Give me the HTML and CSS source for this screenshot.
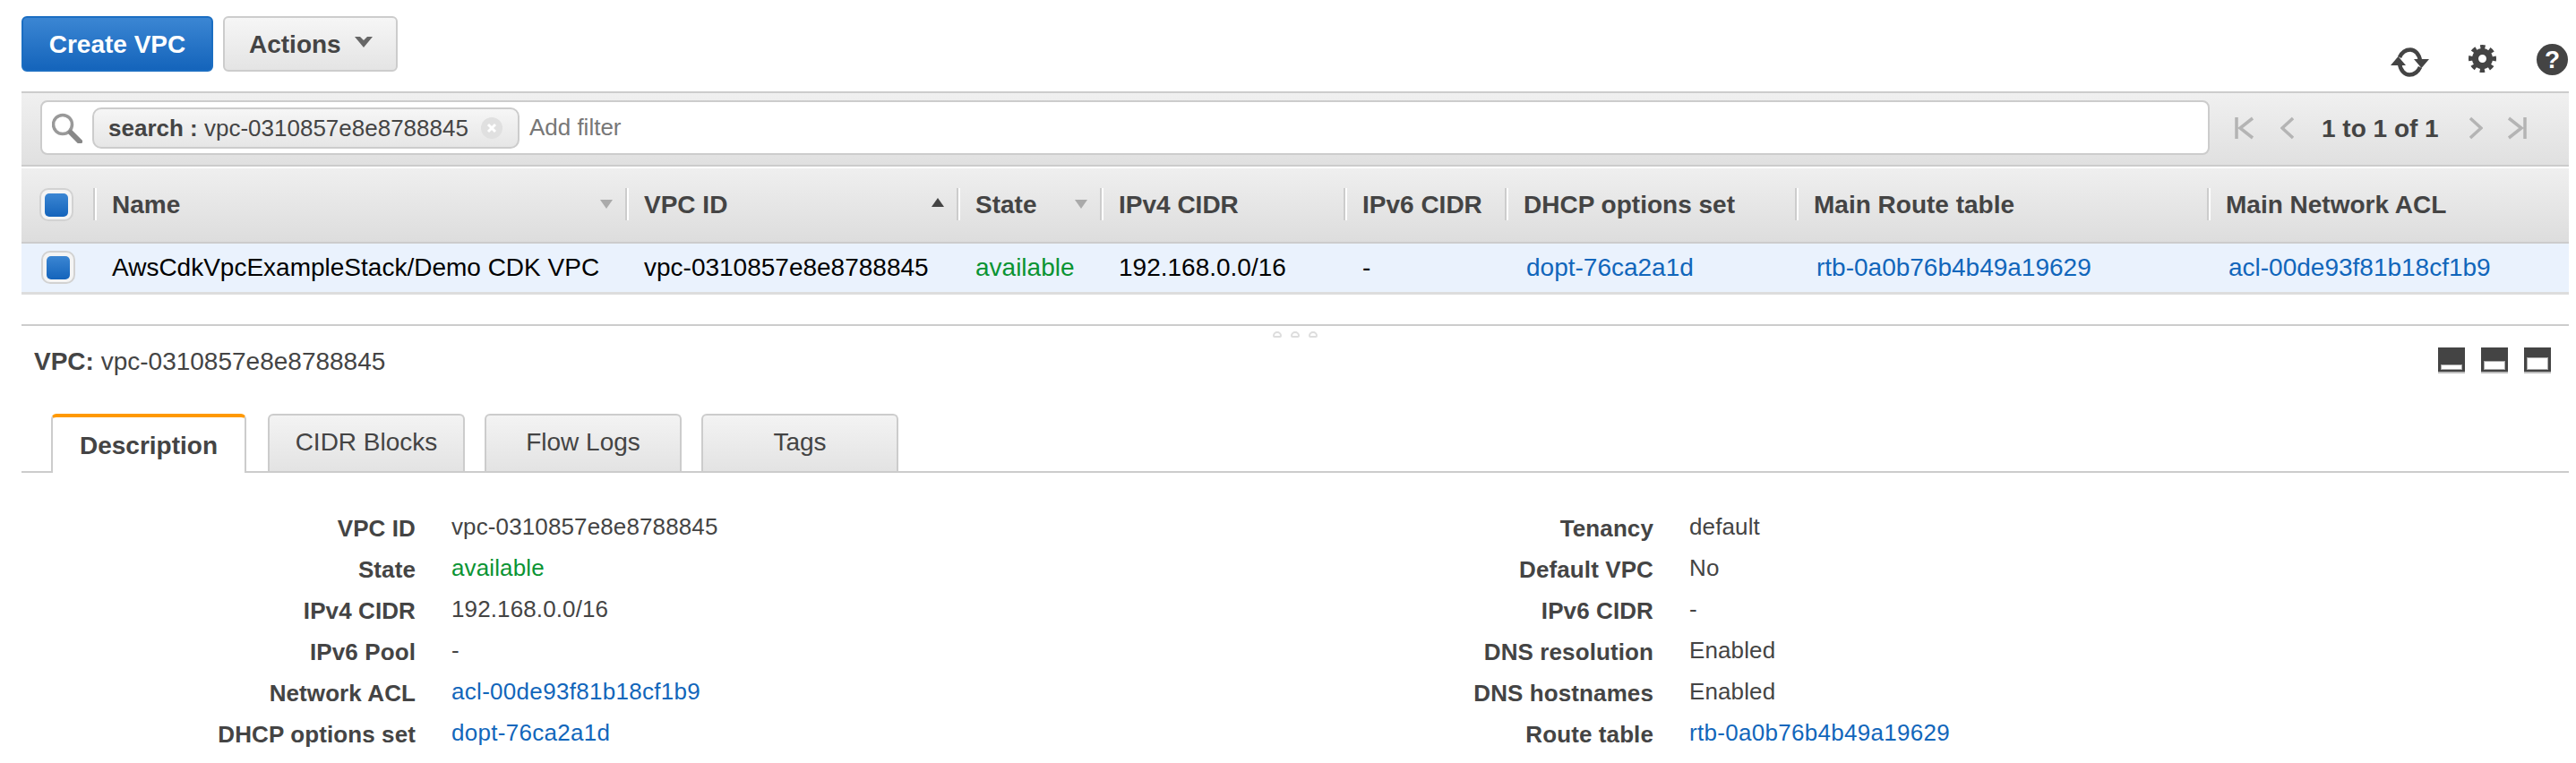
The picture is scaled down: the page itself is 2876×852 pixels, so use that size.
FILE: index.html
```html
<!DOCTYPE html>
<html lang="en">
<head>
<meta charset="utf-8">
<title>VPC</title>
<link rel="stylesheet" href="styles.css">
</head>
<body>
<div class="page">
  <div class="toolbar">
    <button class="btn btn-primary"><span class="btn-label">Create VPC</span></button>
    <button class="btn btn-default"><span class="btn-label">Actions</span>
      <svg class="chev" viewBox="0 0 20 12" width="20" height="12"><path d="M0 0H6L10 4 14 0H20L10 12Z"/></svg>
    </button>
    <div class="tools">
      <svg class="tool-refresh" width="43" height="33" viewBox="0 0 43 33"><path class="arc" d="M10 11C13 4.500 18 2.500 22 2.500 27 2.500 32 7 33 15"/><path class="arc" d="M33 22C30 28.500 25 30.500 21 30.500 16 30.500 11 26 10 18"/><path class="head" d="M26 13H43L34.500 23ZM17 20H0L8.500 10Z"/></svg>
      <svg class="tool-gear" width="31" height="33" viewBox="0 0 31 33"><g transform="rotate(-11.500 15.500 16.500)"><circle cx="15.500" cy="16.500" r="13" class="teeth"/></g><circle cx="15.500" cy="16.500" r="8" class="ring"/></svg>
      <span class="tool-help">?</span>
    </div>
  </div>

  <div class="filterbar">
    <div class="searchbox">
      <svg class="lens" width="34" height="34" viewBox="0 0 34 34"><circle cx="12" cy="13" r="10.500"/><path d="M21 22L31 32"/></svg>
      <span class="chip"><span class="chip-text"><b>search :</b> vpc-0310857e8e8788845</span>
        <svg class="chip-x" width="24" height="24" viewBox="0 0 24 24"><circle cx="12" cy="12" r="12"/><path d="M8 8L16 16M16 8L8 16"/></svg>
      </span>
      <span class="placeholder">Add filter</span>
    </div>
    <div class="pager">
      <svg class="pg pg-first" width="22" height="26" viewBox="0 0 22 26"><path d="M2 1V25M20 2L6 13 20 24"/></svg>
      <svg class="pg pg-prev" width="15" height="26" viewBox="0 0 15 26"><path d="M14 2L2 13 14 24"/></svg>
      <span class="pg-text">1 to 1 of 1</span>
      <svg class="pg pg-next" width="15" height="26" viewBox="0 0 15 26"><path d="M1 2L13 13 1 24"/></svg>
      <svg class="pg pg-last" width="22" height="26" viewBox="0 0 22 26"><path d="M20 1V25M2 2L16 13 2 24"/></svg>
    </div>
  </div>

  <div class="cols head">
    <div class="hcheck"><span class="check"><i></i></span></div>
    <div class="hcell"><span class="hlabel">Name</span><span class="sort down"></span></div>
    <div class="hcell"><span class="hlabel">VPC ID</span><span class="sort up"></span></div>
    <div class="hcell"><span class="hlabel">State</span><span class="sort down"></span></div>
    <div class="hcell"><span class="hlabel">IPv4 CIDR</span></div>
    <div class="hcell"><span class="hlabel">IPv6 CIDR</span></div>
    <div class="hcell"><span class="hlabel">DHCP options set</span></div>
    <div class="hcell"><span class="hlabel">Main Route table</span></div>
    <div class="hcell"><span class="hlabel">Main Network ACL</span></div>
  </div>
  <div class="cols row">
    <div class="rcheck"><span class="check"><i></i></span></div>
    <div class="cell">AwsCdkVpcExampleStack/Demo CDK VPC</div>
    <div class="cell">vpc-0310857e8e8788845</div>
    <div class="cell ok">available</div>
    <div class="cell">192.168.0.0/16</div>
    <div class="cell">-</div>
    <div class="cell cell-link"><a href="#">dopt-76ca2a1d</a></div>
    <div class="cell cell-link"><a href="#">rtb-0a0b76b4b49a19629</a></div>
    <div class="cell cell-link"><a href="#">acl-00de93f81b18cf1b9</a></div>
  </div>

  <div class="split"><i></i><i></i><i></i></div>

  <div class="detail-head">
    <div class="detail-title"><b>VPC:</b> vpc-0310857e8e8788845</div>
    <div class="views">
      <span class="view"><i class="v1"></i></span>
      <span class="view"><i class="v2"></i></span>
      <span class="view"><i class="v3"></i></span>
    </div>
  </div>

  <div class="tabs">
    <div class="tab active">Description</div>
    <div class="tab">CIDR Blocks</div>
    <div class="tab">Flow Logs</div>
    <div class="tab">Tags</div>
  </div>

  <div class="details">
    <dl class="dcol dcol-left">
      <dt>VPC ID</dt><dd>vpc-0310857e8e8788845</dd>
      <dt>State</dt><dd class="ok">available</dd>
      <dt>IPv4 CIDR</dt><dd>192.168.0.0/16</dd>
      <dt>IPv6 Pool</dt><dd>-</dd>
      <dt>Network ACL</dt><dd><a href="#">acl-00de93f81b18cf1b9</a></dd>
      <dt>DHCP options set</dt><dd><a href="#">dopt-76ca2a1d</a></dd>
    </dl>
    <dl class="dcol dcol-right">
      <dt>Tenancy</dt><dd>default</dd>
      <dt>Default VPC</dt><dd>No</dd>
      <dt>IPv6 CIDR</dt><dd>-</dd>
      <dt>DNS resolution</dt><dd>Enabled</dd>
      <dt>DNS hostnames</dt><dd>Enabled</dd>
      <dt>Route table</dt><dd><a href="#">rtb-0a0b76b4b49a19629</a></dd>
    </dl>
  </div>
</div>
</body>
</html>
```
FILE: styles.css
```css
* { box-sizing: border-box; }
html, body { margin: 0; padding: 0; background: #fff; }
body { font-family: "Liberation Sans", Arial, sans-serif; color: #444; overflow: hidden; }
a { color: #1166bb; text-decoration: none; }
.ok { color: #0a9433; }
.page { padding: 0 8px 0 24px; height: 852px; overflow: hidden; }

/* toolbar */
.toolbar { display: flex; align-items: flex-start; height: 102px; padding-top: 18px; }
.btn { height: 62px; font: bold 28px/36px "Liberation Sans", Arial, sans-serif; border-radius: 6px; padding: 0; }
.btn-label { display: block; padding-top: 2px; }
.btn-primary { width: 214px; color: #fff; border: 2px solid #1b6ec2; background: linear-gradient(#3b86d3, #1464bb); }
.btn-default { width: 195px; margin-left: 11px; color: #444; border: 2px solid #ccc; background: linear-gradient(#f6f6f6, #e4e4e4); display: flex; align-items: center; padding-left: 27px; }
.chev { margin-left: 15px; margin-top: -4px; fill: #666; }
.tools { margin-left: auto; margin-right: 1px; margin-top: 31px; display: flex; align-items: flex-start; }
.tool-refresh { margin-top: 4px; }
.arc { fill: none; stroke: #444; stroke-width: 4.5; }
.head { fill: #444; }
.tool-gear { margin-left: 44px; }
.teeth { fill: none; stroke: #444; stroke-width: 5; stroke-dasharray: 5.2 5.01; }
.ring { fill: none; stroke: #444; stroke-width: 7; }
.tool-help { margin-left: 45px; width: 35px; height: 35px; border-radius: 50%; background: #444; color: #fff; font: bold 28px/35px "Liberation Sans", Arial, sans-serif; text-align: center; }

/* filter */
.filterbar { height: 84px; display: flex; align-items: flex-start; padding: 8px 0 0 21px; border-top: 2px solid #ccc; border-bottom: 2px solid #ccc; background: linear-gradient(#f0f0f0, #e0e0e0); }
.searchbox { width: 2422px; height: 61px; display: flex; align-items: center; padding-left: 11px; background: #fff; border: 2px solid #ccc; border-radius: 8px; font-size: 26px; }
.lens { flex: none; fill: none; stroke: #999; stroke-width: 3.5; }
.lens path { stroke: #888; stroke-width: 6; stroke-linecap: round; }
.chip { height: 46px; margin-left: 11px; display: flex; align-items: center; padding: 0 17px 0 16px; border: 2px solid #ccc; border-radius: 10px; background: linear-gradient(#f6f6f6, #e6e6e6); line-height: 36px; white-space: nowrap; }
.chip-x { flex: none; margin-left: 14px; }
.chip-x circle { fill: #e0e0e0; }
.chip-x path { fill: none; stroke: #fff; stroke-width: 3; }
.placeholder { margin-left: 11px; color: #777; }
.pager { display: flex; align-items: center; height: 61px; padding-left: 28px; font: bold 28px/36px "Liberation Sans", Arial, sans-serif; }
.pg { flex: none; fill: none; stroke: #b4b4b4; stroke-width: 3.5; }
.pg-prev { margin-left: 29px; }
.pg-text { margin-left: 31px; padding-top: 2px; }
.pg-next { margin-left: 34px; }
.pg-last { margin-left: 27px; }

/* table */
.cols { display: grid; grid-template-columns: 80px 594px 370px 160px 272px 180px 324px 460px 1fr; }
.head { margin-top: 2px; height: 84px; padding-top: 22px; align-items: start; border-bottom: 2px solid #ccc; background: linear-gradient(#efefef, #dddddd); font: bold 28px/36px "Liberation Sans", Arial, sans-serif; }
.hcheck { padding-left: 20px; }
.rcheck { padding-left: 22px; padding-top: 8px; }
.check { display: block; width: 38px; height: 37px; padding: 4px; border: 2px solid #d2d2d2; border-radius: 10px; background: #f4f4f4; }
.check i { display: block; width: 26px; height: 26px; border-radius: 5px; background: linear-gradient(#3b86d3, #1464bb); }
.hcell { height: 36px; display: flex; justify-content: space-between; align-items: center; padding: 0 14px 0 19px; border-left: 2px solid #ccc; box-shadow: inset 2px 0 0 #fff; white-space: nowrap; }
.hlabel { display: block; padding-top: 2px; }
.sort { width: 0; height: 0; border-left: 7.5px solid transparent; border-right: 7.5px solid transparent; }
.sort.down { border-top: 10px solid #aaa; }
.sort.up { border-bottom: 10px solid #444; margin-bottom: 4px; }
.row { height: 57px; border-bottom: 3px solid #ddd; background: #eaf2fd; color: #000; font-size: 28px; line-height: 36px; }
.cell { padding: 9px 0 0 21px; white-space: nowrap; }
.cell-link { padding-left: 24px; }
.row .ok { color: #0a9433; }

/* splitter */
.split { margin-top: 33px; height: 15px; padding-top: 6px; display: flex; justify-content: center; gap: 10px; border-top: 2px solid #ccc; }
.split i { width: 10px; height: 7px; border: 2px solid #ddd; border-radius: 5px 5px 2px 2px; background: #fff; }

/* detail heading */
.detail-head { height: 85px; padding: 9px 20px 0 14px; display: flex; justify-content: space-between; align-items: flex-start; font-size: 28px; line-height: 36px; }
.views { display: flex; gap: 18px; margin-top: 2px; }
.view { width: 30px; height: 29px; display: flex; align-items: flex-end; justify-content: center; padding-bottom: 3px; background: #444; border-bottom: 2px solid #bbb; }
.view i { display: block; width: 22px; background: #fff; box-shadow: 0 0 0 1px #aaa; }
.v1 { height: 4px; }
.v2 { height: 8px; }
.v3 { height: 12px; }

/* tabs */
.tabs { height: 66px; display: flex; align-items: flex-start; padding-left: 33px; border-bottom: 2px solid #ccc; font-size: 28px; line-height: 36px; }
.tab { width: 220px; height: 64px; margin-right: 22px; padding-top: 12px; text-align: center; border: 2px solid #ccc; border-bottom: 0; border-radius: 6px 6px 0 0; background: linear-gradient(#f3f3f3, #e3e3e3); }
.tab.active { width: 218px; height: 66px; margin-right: 24px; padding-top: 14px; font-weight: bold; border-top: 4px solid #ff9900; background: #fff; }

/* details */
.details { display: grid; grid-template-columns: 1400px 1fr; padding-top: 44px; font-size: 26px; line-height: 36px; }
.dcol { margin: 0; display: grid; column-gap: 40px; grid-auto-rows: 46px; }
.dcol-left { grid-template-columns: 440px 1fr; }
.dcol-right { grid-template-columns: 422px 1fr; }
dt { font-weight: bold; text-align: right; letter-spacing: 0.1px; }
dd { margin: -2px 0 0; white-space: nowrap; letter-spacing: 0.12px; }
dd a { letter-spacing: 0.3px; }
```
